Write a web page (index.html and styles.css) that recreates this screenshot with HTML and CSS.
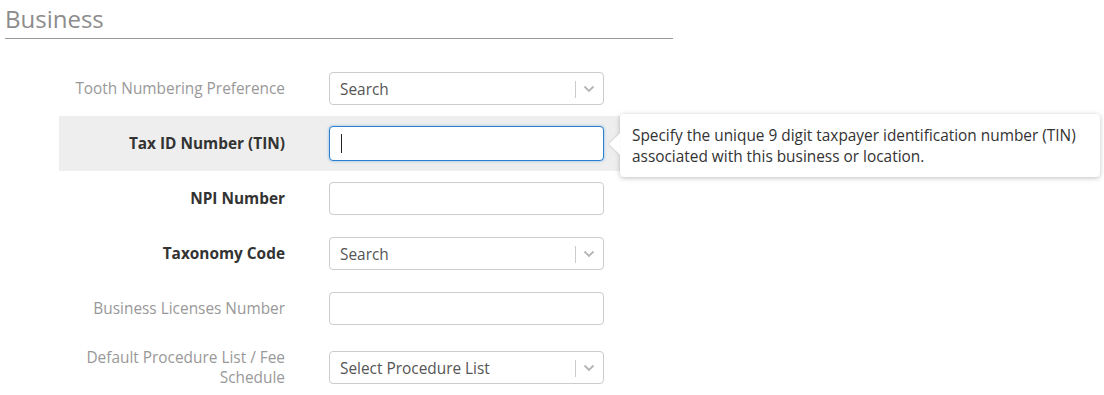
FILE: index.html
```html
<!DOCTYPE html>
<html lang="en">

<head>
    <meta charset="UTF-8">
    <meta name="viewport" content="width=device-width, initial-scale=1.0">
    <title>Business</title>
    <link rel="stylesheet" href="styles.css">
</head>

<body>
    <div class="secao">
        <h2 class="secao__titulo">Business</h2>

        <div class="formulario">
            <div class="formulario__linha">
                <label class="formulario__rotulo">Tooth Numbering Preference</label>
                <div class="formulario__campo">
                    <div class="seletor">
                        <span class="seletor__texto">Search</span>
                        <span class="seletor__divisor"></span>
                        <svg class="seletor__seta" width="12" height="8" viewBox="0 0 12 8"><path d="M1.5 1.5 L6 6 L10.5 1.5" fill="none" stroke="#b5b5b5" stroke-width="1.8"/></svg>
                    </div>
                </div>
            </div>

            <div class="formulario__linha formulario__linha--ativa">
                <label class="formulario__rotulo formulario__rotulo--obrigatorio">Tax ID Number (TIN)</label>
                <div class="formulario__campo">
                    <div class="entrada entrada--foco"><span class="entrada__cursor"></span></div>
                    <div class="dica">
                        Specify the unique 9 digit taxpayer identification number (TIN) associated with this business or location.
                    </div>
                </div>
            </div>

            <div class="formulario__linha">
                <label class="formulario__rotulo formulario__rotulo--obrigatorio">NPI Number</label>
                <div class="formulario__campo">
                    <div class="entrada"></div>
                </div>
            </div>

            <div class="formulario__linha">
                <label class="formulario__rotulo formulario__rotulo--obrigatorio">Taxonomy Code</label>
                <div class="formulario__campo">
                    <div class="seletor">
                        <span class="seletor__texto">Search</span>
                        <span class="seletor__divisor"></span>
                        <svg class="seletor__seta" width="12" height="8" viewBox="0 0 12 8"><path d="M1.5 1.5 L6 6 L10.5 1.5" fill="none" stroke="#b5b5b5" stroke-width="1.8"/></svg>
                    </div>
                </div>
            </div>

            <div class="formulario__linha">
                <label class="formulario__rotulo">Business Licenses Number</label>
                <div class="formulario__campo">
                    <div class="entrada"></div>
                </div>
            </div>

            <div class="formulario__linha">
                <label class="formulario__rotulo">Default Procedure List / Fee Schedule</label>
                <div class="formulario__campo">
                    <div class="seletor">
                        <span class="seletor__texto">Select Procedure List</span>
                        <span class="seletor__divisor"></span>
                        <svg class="seletor__seta" width="12" height="8" viewBox="0 0 12 8"><path d="M1.5 1.5 L6 6 L10.5 1.5" fill="none" stroke="#b5b5b5" stroke-width="1.8"/></svg>
                    </div>
                </div>
            </div>
        </div>
    </div>
</body>

</html>
```

FILE: styles.css
```css
body {
    margin: 0;
    background-color: #fff;
    font-family: "Open Sans", "Liberation Sans", sans-serif;
    font-size: 15.4px;
    color: #333;
}

.secao {
    padding: 4px 0 0 5px;
}

.secao__titulo {
    width: 668px;
    margin: 0;
    padding-bottom: 4px;
    border-bottom: 1px solid #999;
    font-size: 24px;
    font-weight: 400;
    line-height: 30px;
    color: #8c8c8c;
}

.formulario {
    margin: 22px 0 0 54px;
    width: 562px;
}

.formulario__linha {
    display: flex;
    align-items: center;
    padding: 11px 0;
}

.formulario__linha--ativa {
    background-color: #eee;
}

.formulario__rotulo {
    width: 226px;
    flex-shrink: 0;
    text-align: right;
    line-height: 20px;
    padding-top: 1px;
    color: #999;
}

.formulario__rotulo--obrigatorio {
    font-weight: 700;
    color: #333;
}

.formulario__campo {
    position: relative;
    margin-left: 44px;
    width: 275px;
}

.entrada,
.seletor {
    box-sizing: border-box;
    height: 33px;
    border: 1px solid #ccc;
    border-radius: 4px;
    background-color: #fff;
}

.entrada--foco {
    height: 35px;
    margin: -1px 0;
    border-color: #2a7fcf;
    box-shadow: 0 0 3px rgba(42, 127, 207, 0.5);
    display: flex;
    align-items: center;
    padding-left: 11px;
}

.entrada__cursor {
    width: 1px;
    height: 19px;
    background-color: #222;
}

.seletor {
    display: flex;
    align-items: center;
    padding: 1px 8px 0 10px;
    color: #555;
}

.seletor__texto {
    flex: 1;
}

.seletor__divisor {
    width: 1px;
    height: 17px;
    background-color: #ccc;
    margin-right: 7px;
}

/* balão de ajuda ao lado do campo em foco */
.dica {
    position: absolute;
    left: 291px;
    top: -13px;
    width: 480px;
    box-sizing: border-box;
    padding: 11px 12px 10px 12px;
    background-color: #fff;
    border-radius: 4px;
    box-shadow: 0 1px 5px rgba(0, 0, 0, 0.25);
    line-height: 21px;
    color: #333;
    z-index: 2;
}

.dica::before {
    content: "";
    position: absolute;
    left: -11px;
    top: 19px;
    border-top: 11px solid transparent;
    border-bottom: 11px solid transparent;
    border-right: 11px solid #fff;
    filter: drop-shadow(-1px 0 1px rgba(0, 0, 0, 0.12));
}
```
